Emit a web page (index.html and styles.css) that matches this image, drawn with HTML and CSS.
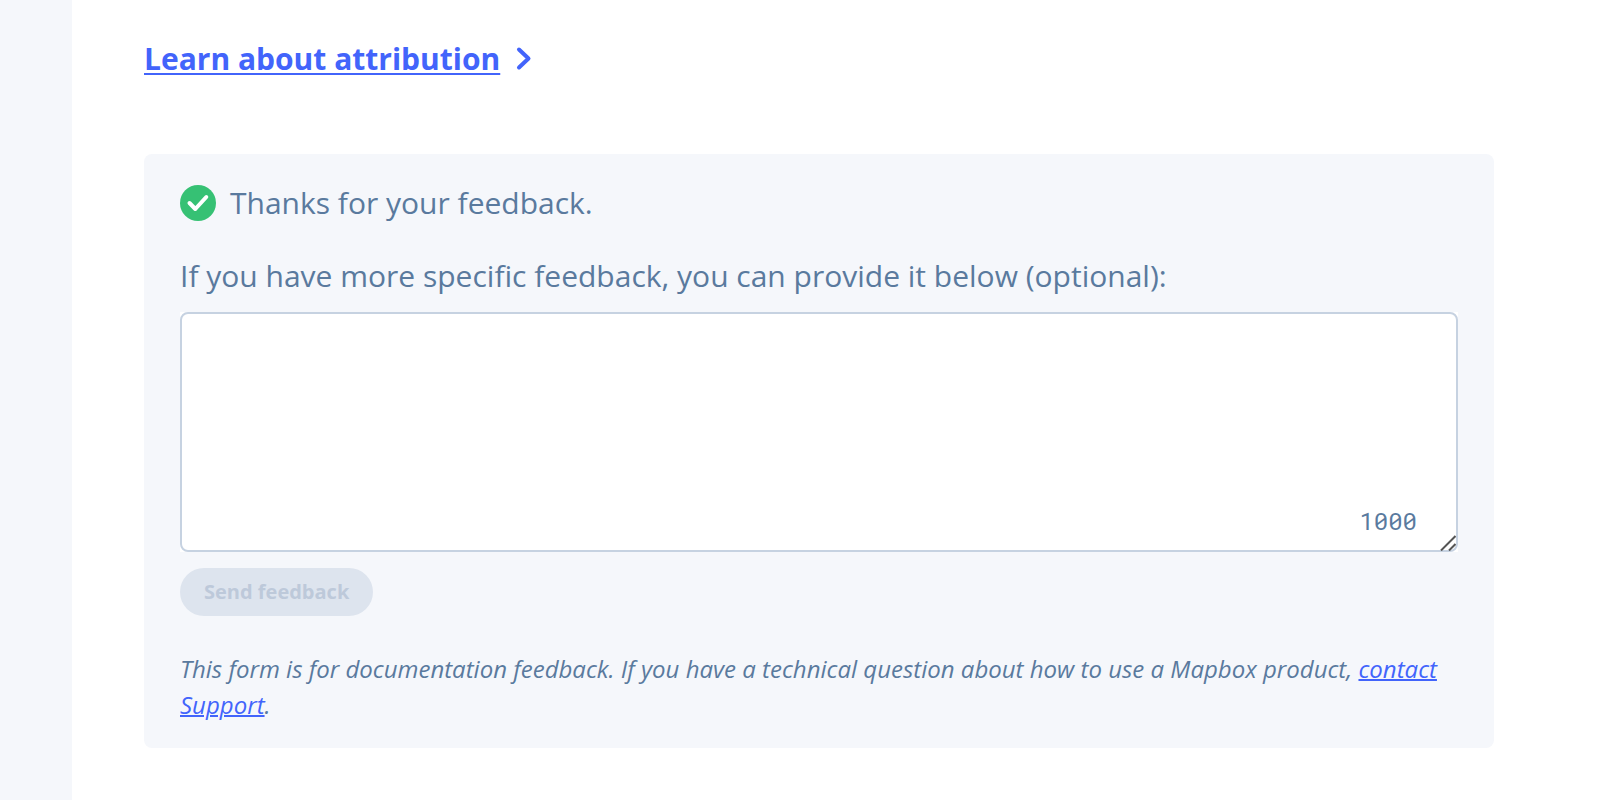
FILE: index.html
```html
<!DOCTYPE html>
<html lang="en">
<head>
<meta charset="utf-8">
<title>Learn about attribution</title>
<link rel="stylesheet" href="styles.css">
</head>
<body>
<main class="page">
  <a class="next-link" href="#attribution"><span class="next-link-text">Learn about attribution</span><svg class="chevron" viewBox="0 0 36 36" aria-hidden="true"><path d="M14 8.500l9.500 9-9.500 9"/></svg></a>
  <form class="feedback">
    <p class="thanks">
      <svg class="check" viewBox="0 0 36 36" aria-hidden="true"><circle cx="18" cy="18" r="18"/><path d="M9.500 18l5.800 6L26.300 12"/></svg>
      Thanks for your feedback.
    </p>
    <label class="prompt" for="comment">If you have more specific feedback, you can provide it below (optional):</label>
    <div class="field">
      <textarea class="comment" id="comment" maxlength="1000"></textarea>
      <span class="counter">1000</span>
      <svg class="grip" viewBox="0 0 16 16" aria-hidden="true"><path d="M1 15.500L15.500 1M9 15.500L15.500 9"/></svg>
    </div>
    <button class="send" type="submit" disabled>Send feedback</button>
    <p class="note">This form is for documentation feedback. If you have a technical question about how to use a Mapbox product, <a class="support" href="#support">contact Support</a>.</p>
  </form>
</main>
</body>
</html>
```

FILE: styles.css
```css
* {
  box-sizing: border-box;
}

body {
  margin: 0;
  background: #f5f7fb;
  color: #5a7a9e;
  font-family: "Open Sans", "Noto Sans", sans-serif;
  font-size: 30px;
  line-height: 48px;
}

.page {
  min-height: 100vh;
  margin-left: 72px;
  padding: 35px 106px 52px 72px;
  background: #fff;
}

.next-link {
  display: flex;
  align-items: center;
  width: fit-content;
  color: #4264fb;
  font-weight: 700;
  text-decoration: none;
}

.next-link-text {
  text-decoration: underline;
  text-decoration-thickness: 2px;
  text-underline-offset: 3px;
}

.chevron {
  width: 36px;
  height: 36px;
  margin-left: 5px;
  fill: none;
  stroke: currentColor;
  stroke-width: 4;
  stroke-linecap: round;
  stroke-linejoin: round;
}

.feedback {
  margin-top: 71px;
  padding: 26px 36px 25px;
  border-radius: 8px;
  background: #f5f7fb;
}

.thanks {
  display: flex;
  align-items: center;
  gap: 14px;
  margin: 0 0 26px;
  line-height: 46px;
}

.check {
  width: 36px;
  height: 36px;
  fill: #36c174;
}

.check path {
  fill: none;
  stroke: #fff;
  stroke-width: 4;
  stroke-linecap: round;
  stroke-linejoin: round;
}

.prompt {
  display: block;
  margin-bottom: 12px;
}

.field {
  position: relative;
  background: #fff;
}

.comment {
  display: block;
  width: 100%;
  height: 240px;
  padding: 12px 20px;
  border: 2px solid #c6d2e1;
  border-radius: 8px;
  outline: 0;
  background: #fff;
  color: inherit;
  font: inherit;
  resize: vertical;
}

.comment::-webkit-resizer {
  background: transparent;
}

.counter {
  position: absolute;
  right: 41px;
  bottom: 13px;
  font-family: "Roboto Mono", "Noto Sans Mono", "Liberation Mono", monospace;
  font-size: 24px;
  line-height: 36px;
}

.grip {
  position: absolute;
  right: 2px;
  bottom: 1px;
  width: 16px;
  height: 16px;
  fill: none;
  stroke: #555;
  stroke-width: 2;
  pointer-events: none;
}

.send {
  display: block;
  margin-top: 16px;
  padding: 0 24px;
  border: 0;
  border-radius: 24px;
  background: #dde4ee;
  color: #bdc9da;
  font: inherit;
  font-size: 20px;
  font-weight: 700;
  line-height: 48px;
}

.note {
  margin: 35px 0 0;
  font-size: 24px;
  font-style: italic;
  line-height: 36px;
}

.support {
  color: #4264fb;
  text-decoration-thickness: 2px;
}
```
